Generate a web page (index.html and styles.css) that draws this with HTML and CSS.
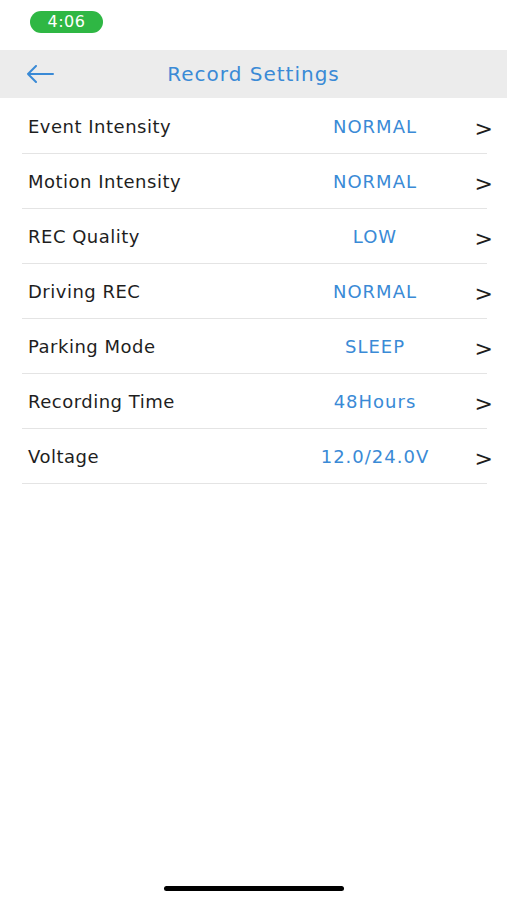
FILE: index.html
```html
<!doctype html>
<html>
	<head>
		<meta name="viewport" content="width=device-width, initial-scale=1.0">
		<title>Record Settings</title>
		<link rel="stylesheet" href="styles.css">
	</head>
	<body>

		<div class="statusBar">
			<span class="timePill">4:06</span>
		</div>

		<nav class="navBar">
			<a class="backBtn" href="#">
				<svg width="28" height="18" viewBox="0 0 28 18">
					<path d="M27 9 H2 M10 1 L2 9 L10 17" fill="none" stroke="#3a8ad6" stroke-width="2" stroke-linecap="round" stroke-linejoin="round"/>
				</svg>
			</a>
			<h1 class="navTitle">Record Settings</h1>
		</nav>

		<main class="settingsList">
			<div class="settingRow">
				<span class="settingName">Event Intensity</span>
				<span class="settingValue">NORMAL</span>
				<span class="settingArrow">&gt;</span>
			</div>
			<div class="settingRow">
				<span class="settingName">Motion Intensity</span>
				<span class="settingValue">NORMAL</span>
				<span class="settingArrow">&gt;</span>
			</div>
			<div class="settingRow">
				<span class="settingName">REC Quality</span>
				<span class="settingValue">LOW</span>
				<span class="settingArrow">&gt;</span>
			</div>
			<div class="settingRow">
				<span class="settingName">Driving REC</span>
				<span class="settingValue">NORMAL</span>
				<span class="settingArrow">&gt;</span>
			</div>
			<div class="settingRow">
				<span class="settingName">Parking Mode</span>
				<span class="settingValue">SLEEP</span>
				<span class="settingArrow">&gt;</span>
			</div>
			<div class="settingRow">
				<span class="settingName">Recording Time</span>
				<span class="settingValue">48Hours</span>
				<span class="settingArrow">&gt;</span>
			</div>
			<div class="settingRow">
				<span class="settingName">Voltage</span>
				<span class="settingValue">12.0/24.0V</span>
				<span class="settingArrow">&gt;</span>
			</div>
		</main>

		<div class="homeBar"></div>

	</body>
</html>
```

FILE: styles.css
```css
html, body {
	margin: 0; padding: 0;
	font-family: "DejaVu Sans", sans-serif;
	background-color: #ffffff;
	height: 900px;
	overflow: hidden;
}

body {
	display: flex;
	flex-direction: column;
}

.statusBar {
	height: 50px;
	padding: 11px 0 0 30px;
	box-sizing: border-box;
}

.timePill {
	display: inline-block;
	width: 73px;
	height: 22px;
	line-height: 22px;
	border-radius: 11px;
	background-color: #2fb744;
	color: white;
	font-size: 16px;
	letter-spacing: 0.5px;
	text-align: center;
}

.navBar {
	height: 48px;
	background-color: #ececec;
	display: flex;
	align-items: center;
	position: relative;
}

.backBtn {
	display: flex;
	padding-left: 26px;
}

.navTitle {
	position: absolute;
	left: 0; right: 0;
	margin: 0;
	text-align: center;
	font-size: 20px;
	letter-spacing: 1px;
	font-weight: normal;
	color: #3a8ad6;
	pointer-events: none;
}

.settingsList {
	padding: 1px 20px 0 22px;
}

.settingRow {
	display: flex;
	align-items: center;
	height: 54px;
	border-bottom: 1px solid #e4e4e4;
	font-size: 18px;
	letter-spacing: 0.5px;
}

.settingName {
	flex: 1;
	padding-left: 6px;
	color: #1e1e1e;
}

.settingValue {
	width: 140px;
	text-align: center;
	letter-spacing: 1px;
	color: #3a8ad6;
}

.settingArrow {
	width: 48px;
	text-align: right;
	font-size: 22px;
	letter-spacing: 0;
	color: #1e1e1e;
	padding-top: 4px;
	margin-right: -6px;
}

.homeBar {
	margin: auto auto 9px;
	width: 180px;
	height: 5px;
	border-radius: 3px;
	background-color: #000;
}
```
